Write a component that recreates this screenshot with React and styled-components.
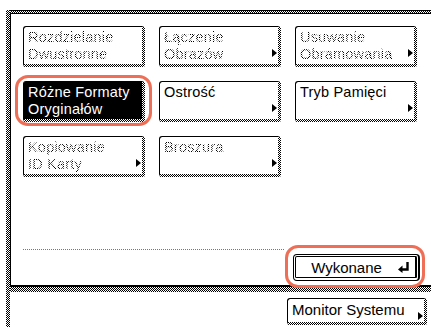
import React from "react"
import styled, { createGlobalStyle, css } from "styled-components"

const checker = "repeating-conic-gradient(#000 0% 25%, #fff 0% 50%) 0 0 / 2px 2px"

const GlobalStyle = createGlobalStyle`
  html, body {
    margin: 0;
    background: #fff;
  }
  body {
    font-family: "Liberation Sans", Arial, sans-serif;
  }
`

const Screen = styled.div`
  display: flex;
  width: 431px;
  height: 327px;
  box-sizing: border-box;
  padding: 10px 0 0 6px;
  overflow: hidden;
`

const Rail = styled.div`
  width: 4px;
  background: ${checker};
`

const Main = styled.div`
  flex: 1;
  display: flex;
  flex-direction: column;
`

const TopBar = styled.div`
  height: 2px;
  border-top: 1px solid #000;
  border-bottom: 1px solid #000;
  background: ${checker};
`

const Content = styled.div`
  display: flex;
  flex-direction: column;
  box-sizing: content-box;
  height: 255px;
  padding: 12px 11px 4px 12px;
  border-left: 1px solid #000;
  border-bottom: 2px solid #000;
`

const BottomBar = styled.div`
  height: 5px;
  background: ${checker};
`

const Grid = styled.div`
  display: grid;
  grid-template-columns: repeat(3, 122px);
  grid-auto-rows: 41px;
  column-gap: 14px;
  row-gap: 14px;
`

const ring = css`
  &::after {
    content: "";
    position: absolute;
    inset: ${(p) => p.$ringInset};
    border: 3px solid #ee6f55;
    border-radius: 13px;
    pointer-events: none;
  }
`

const KeyButton = styled.div`
  position: relative;
  box-sizing: border-box;
  border: 1px solid #000;
  border-right: 3px solid transparent;
  border-bottom: 3px solid transparent;
  border-radius: 3px 3px 2px 2px;
  background: linear-gradient(${(p) => (p.$selected ? "#000" : "#fff")}, ${(p) => (p.$selected ? "#000" : "#fff")}) padding-box,
    ${checker} border-box;
  padding: 2px 4px 0 4px;
  font-size: 14.5px;
  line-height: 16.5px;
  letter-spacing: 0.2px;
  color: ${(p) => (p.$selected ? "#fff" : "#000")};
  white-space: nowrap;
  ${(p) => p.$ringInset && ring}
`

const Label = styled.span`
  display: block;
  ${(p) =>
    p.$disabled &&
    css`
      color: transparent;
      background: repeating-conic-gradient(#000 0% 25%, transparent 0% 50%) 0 0 / 2px 2px;
      -webkit-background-clip: text;
      background-clip: text;
    `}
`

const Arrow = styled.span`
  position: absolute;
  right: 1px;
  bottom: ${(p) => p.$bottom || 7}px;
  width: 0;
  height: 0;
  border-left: 5px solid #000;
  border-top: 4px solid transparent;
  border-bottom: 4px solid transparent;
`

const Footer = styled.div`
  margin-top: auto;
  display: flex;
  align-items: flex-start;
`

const Divider = styled.div`
  flex: 1;
  height: 1px;
  margin-right: 8px;
  background: repeating-linear-gradient(90deg, #777 0 1px, transparent 1px 2px);
`

const DoneButton = styled.div`
  position: relative;
  margin-top: 5px;
  width: 127px;
  height: 27px;
  box-sizing: border-box;
  display: flex;
  align-items: center;
  border: 3px double #000;
  border-right-width: 5px;
  border-bottom-width: 4px;
  border-radius: 4px;
  padding-right: 5px;
  font-size: 15px;
  ${ring}
`

const DoneText = styled.span`
  flex: 1;
  text-align: center;
`

const Below = styled.div`
  display: flex;
  justify-content: flex-end;
  padding: 6px 4px 0 0;
`

const MonitorButton = styled(KeyButton)`
  width: 140px;
  height: 27px;
  display: flex;
  align-items: center;
  padding: 0 4px;
  font-size: 15px;
  letter-spacing: 0;
`

const ReturnIcon = () => (
  <svg width="13" height="12" viewBox="0 0 13 12">
    <path d="M10.5 1 V8.5 H4" fill="none" stroke="#000" strokeWidth="2.4" />
    <path d="M1 8.5 L5.5 4.5 L5.5 12 Z" fill="#000" />
  </svg>
)

const keys = [
  { lines: ["Rozdzielanie", "Dwustronne"], disabled: true },
  { lines: ["Łączenie", "Obrazów"], disabled: true, arrow: true },
  { lines: ["Usuwanie", "Obramowania"], disabled: true, arrow: true },
  { lines: ["Różne Formaty", "Oryginałów"], selected: true },
  { lines: ["Ostrość"], arrow: true },
  { lines: ["Tryb Pamięci"], arrow: true },
  { lines: ["Kopiowanie", "ID Karty"], disabled: true, arrow: true },
  { lines: ["Broszura"], disabled: true, arrow: true },
]

export default function App() {
  return (
    <>
      <GlobalStyle />
      <Screen>
        <Rail />
        <Main>
          <TopBar />
          <Content>
            <Grid>
              {keys.map((k) => (
                <KeyButton
                  key={k.lines[0]}
                  $selected={k.selected}
                  $ringInset={k.selected ? "-7px -10px -7px -9px" : undefined}
                >
                  {k.lines.map((l) => (
                    <Label key={l} $disabled={k.disabled}>
                      {l}
                    </Label>
                  ))}
                  {k.arrow && <Arrow />}
                </KeyButton>
              ))}
            </Grid>
            <Footer>
              <Divider />
              <DoneButton $ringInset="-12px -10px -11px -11px">
                <DoneText>Wykonane</DoneText>
                <ReturnIcon />
              </DoneButton>
            </Footer>
          </Content>
          <BottomBar />
          <Below>
            <MonitorButton>
              Monitor Systemu
              <Arrow $bottom={2} />
            </MonitorButton>
          </Below>
        </Main>
      </Screen>
    </>
  )
}
